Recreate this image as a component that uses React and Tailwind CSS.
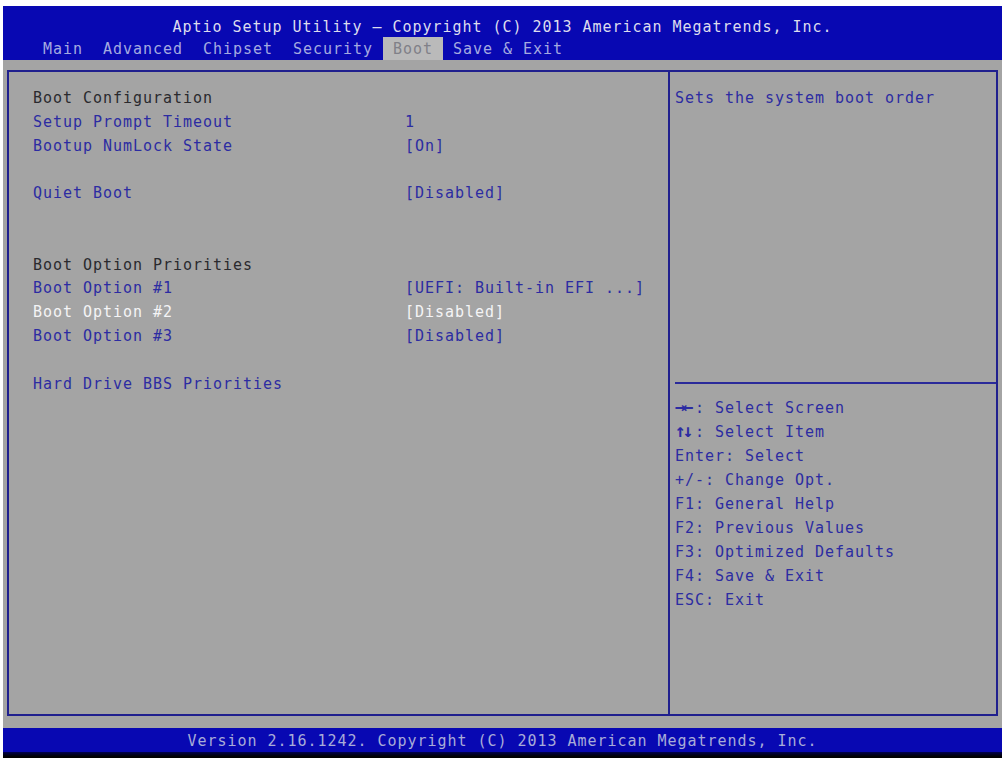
const mono = "font-['DejaVu_Sans_Mono',monospace] text-[15px] tracking-[0.97px]";

const tabs = ['Main', 'Advanced', 'Chipset', 'Security', 'Boot', 'Save & Exit'];

const rows = [
  { label: 'Boot Configuration', heading: true },
  { label: 'Setup Prompt Timeout', value: '1' },
  { label: 'Bootup NumLock State', value: '[On]' },
  {},
  { label: 'Quiet Boot', value: '[Disabled]' },
  {},
  {},
  { label: 'Boot Option Priorities', heading: true },
  { label: 'Boot Option #1', value: '[UEFI: Built-in EFI ...]' },
  { label: 'Boot Option #2', value: '[Disabled]', selected: true },
  { label: 'Boot Option #3', value: '[Disabled]' },
  {},
  { label: 'Hard Drive BBS Priorities' },
];

const help = [
  ['→←', ': Select Screen', true],
  ['↑↓', ': Select Item', true],
  ['Enter', ': Select'],
  ['+/-', ': Change Opt.'],
  ['F1', ': General Help'],
  ['F2', ': Previous Values'],
  ['F3', ': Optimized Defaults'],
  ['F4', ': Save & Exit'],
  ['ESC', ': Exit'],
];

function Row({ row }) {
  if (!row.label) return <div className="h-[23.8px]" />;
  const color = row.heading
    ? 'text-[#2a2a2e]'
    : row.selected
      ? 'text-[#f4f4f6]'
      : 'text-[#2c2ca2]';
  return (
    <div className={`grid grid-cols-[372px_1fr] h-[23.8px] leading-[23.8px] ${color}`}>
      <span className="whitespace-pre">{row.label}</span>
      <span className="whitespace-pre">{row.value}</span>
    </div>
  );
}

export default function App() {
  return (
    <div className={`w-[1007px] h-[765px] bg-white pt-[6px] pl-[3px] pr-[5px] ${mono}`}>
      {/* header */}
      <div className="h-[54px] bg-[#0808b2] pt-[12px]">
        <div className="h-[19px] leading-[19px] text-center text-[#dcdcee]">
          Aptio Setup Utility – Copyright (C) 2013 American Megatrends, Inc.
        </div>
        <div className="flex h-[23px] pl-[30px]">
          {tabs.map((t) => (
            <div
              key={t}
              className={`px-[10px] pt-[2px] leading-[21px] whitespace-pre ${
                t === 'Boot' ? 'bg-[#bababa] text-[#808088]' : 'text-[#a4aae0]'
              }`}
            >
              {t}
            </div>
          ))}
        </div>
      </div>

      {/* body */}
      <div className="h-[668px] bg-[#a4a4a4] pt-[10px] pl-[4px] pr-[4px]">
        <div className="flex h-[646px] border-2 border-[#20208e]">
          <div className="w-[661px] border-r-2 border-[#20208e] pt-[15px] pl-[24px]">
            {rows.map((r, i) => (
              <Row key={i} row={r} />
            ))}
          </div>
          <div className="flex-1 flex flex-col">
            <div className="h-[310px] pt-[14px] pl-[5px] leading-[24px] text-[#2c2ca2]">
              Sets the system boot order
            </div>
            <div className="ml-[5px] h-[2px] bg-[#2a2a9a]" />
            <div className="pt-[12px] pl-[5px] text-[#2c2ca2]">
              {help.map(([k, v, bold]) => (
                <div key={k} className="h-[24px] leading-[24px] whitespace-pre">
                  {bold ? (
                    <span className="inline-block w-[20px] text-[18px] font-bold tracking-[-3px] leading-[20px]">{k}</span>
                  ) : (
                    k
                  )}
                  {v}
                </div>
              ))}
            </div>
          </div>
        </div>
      </div>

      {/* footer */}
      <div className="h-[24px] bg-[#0808b2] pt-[2px] leading-[22px] text-center text-[#a8acd8]">
        Version 2.16.1242. Copyright (C) 2013 American Megatrends, Inc.
      </div>
      <div className="h-[6px] bg-gradient-to-b from-[#000050] to-black" />
    </div>
  );
}
